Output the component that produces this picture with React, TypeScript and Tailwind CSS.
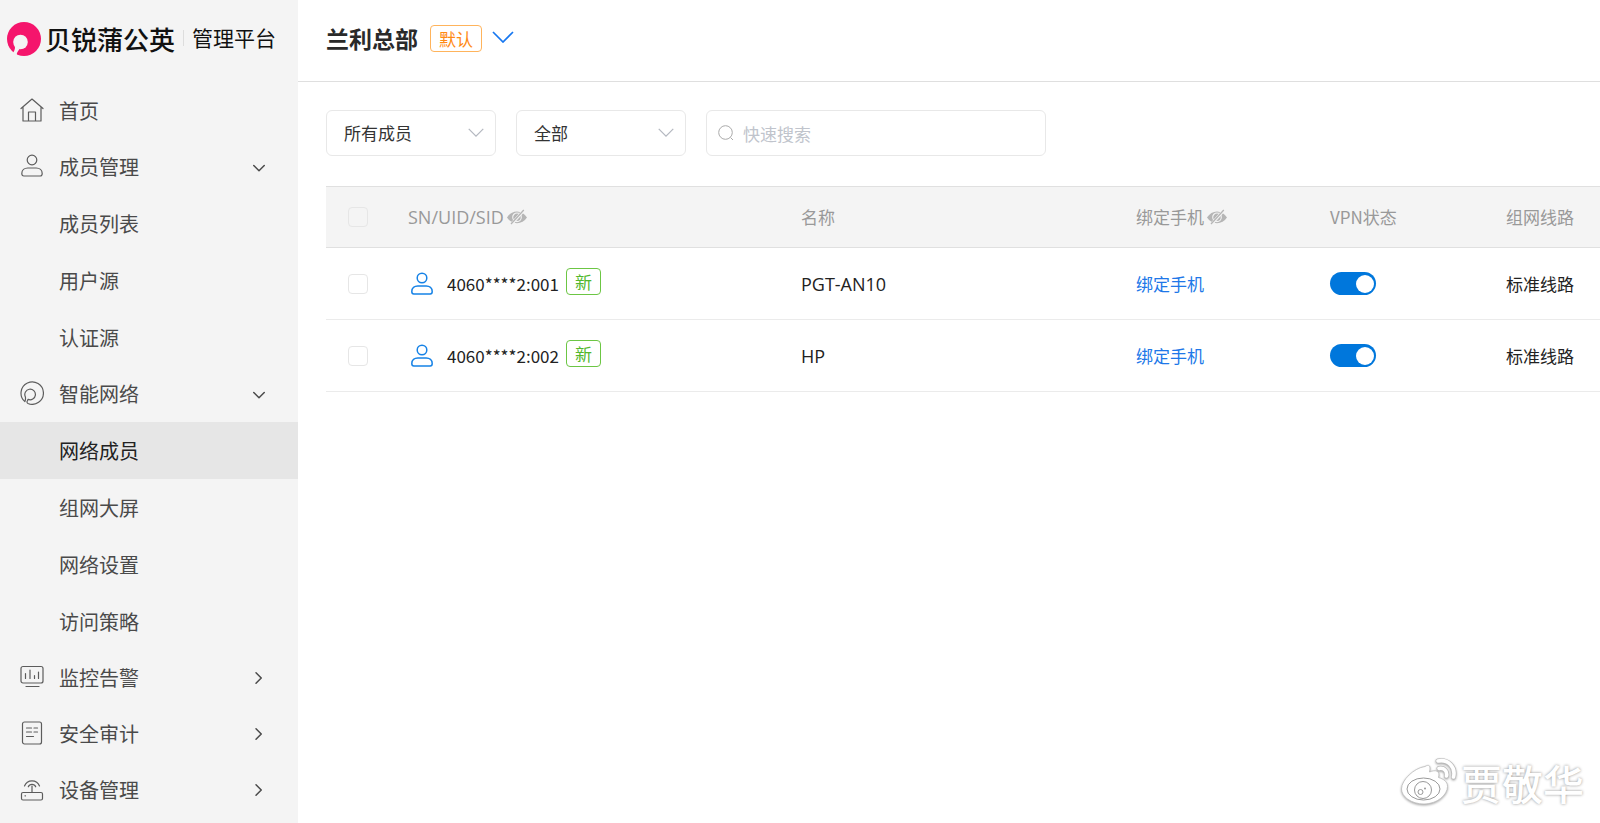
import { useState } from 'react';
import type { ReactNode } from 'react';

interface IconProps {
    className?: string;
}

interface MenuItem {
    label: string;
    icon: ReactNode;
    open?: boolean;
    children?: string[];
}

interface Member {
    sn: string;
    name: string;
    line: string;
}

function Svg({ className = 'mb-0.5 size-6 text-[#5c5c5c]', children }: IconProps & { children: ReactNode }) {
    return (
        <svg
            className={className}
            viewBox="0 0 24 24"
            fill="none"
            stroke="currentColor"
            strokeWidth="1.2"
            strokeLinecap="round"
            strokeLinejoin="round"
            aria-hidden="true"
        >
            {children}
        </svg>
    );
}

function HomeIcon() {
    return (
        <Svg>
            <path d="M1 10.5 12 1l11 9.500M3 9v14h18V9M8.500 23v-9h7v9" />
        </Svg>
    );
}

function UserIcon({ className }: IconProps) {
    return (
        <Svg className={className}>
            <circle cx="12" cy="6" r="4.800" />
            <path d="M1.800 19.500c0-3.500 2.700-5.500 6-5.500h8.400c3.300 0 6 2 6 5.500 0 1.700-.8 2.500-2 2.500H3.800c-1.200 0-2-.8-2-2.500Z" />
        </Svg>
    );
}

function NetworkIcon() {
    return (
        <Svg>
            <path d="M4.900 20.600a11.200 11.200 0 1 1 3.100 1.900c-1.200-.6-1.200-1.800-.6-2.800l.7-1.300a5.300 5.300 0 1 0-2.800-2.700c.5 1.300.4 2.300-.4 4.900Z" />
        </Svg>
    );
}

function MonitorIcon() {
    return (
        <Svg>
            <rect x="1" y="1.500" width="22" height="16.500" rx="2" />
            <path d="M5.500 8.500v5M10 5v8.500M14.500 10.500v3M18.500 7v6.500M6 21.500h13" />
        </Svg>
    );
}

function AuditIcon() {
    return (
        <Svg>
            <rect x="2.500" y="1" width="19" height="22" rx="2" />
            <path d="M6.500 7h5M14 7h3.500M6.500 11h5M14 11h3.500M6.500 15.500h7" />
        </Svg>
    );
}

function RouterIcon() {
    return (
        <Svg>
            <rect x="1.500" y="15.500" width="21" height="7.500" rx="1.500" />
            <path d="M12 9v6.500M5 18.800h.5M8.300 9.800a4 4 0 0 1 7.400 0M4.500 9a8 8 0 0 1 15 0" />
        </Svg>
    );
}

function Chevron({ open, className }: IconProps & { open?: boolean }) {
    return (
        <Svg className={className}>
            <path d={open ? 'M5 10l7 7 7-7' : 'M8 5l7 7-7 7'} strokeWidth="2" />
        </Svg>
    );
}

function WideChevron({ className }: IconProps) {
    return (
        <svg className={className} viewBox="0 0 22 12" fill="none" stroke="currentColor" aria-hidden="true">
            <path d="M1 1l10 10L21 1" strokeWidth="1.700" />
        </svg>
    );
}

function SearchIcon({ className }: IconProps) {
    return (
        <svg className={className} viewBox="0 0 16 16" fill="none" stroke="currentColor" aria-hidden="true">
            <circle cx="7.500" cy="7.500" r="6.800" />
            <path d="M12.500 12.500 15 15" />
        </svg>
    );
}

function EyeOffIcon() {
    return (
        <svg className="h-4 w-5 text-[#b5b5b5]" viewBox="0 0 20 16" aria-hidden="true">
            <path d="M0 8.500C2.500 4.500 6 2.500 10 2.500s7.500 2 10 6c-2.500 3.700-6 5.700-10 5.700S2.500 12.200 0 8.500Z" fill="currentColor" />
            <circle cx="10" cy="8.300" r="4.300" fill="none" stroke="#f4f4f4" strokeWidth="1.100" />
            <path d="M4.300 15.500 16.500 1.500" stroke="#f4f4f4" strokeWidth="3" />
            <path d="M4 15 16.800 1" stroke="currentColor" strokeWidth="1.300" />
        </svg>
    );
}

function Logo() {
    return (
        <svg className="size-[34px] shrink-0" viewBox="0 0 34 34" aria-hidden="true">
            <circle cx="17" cy="17" r="17" fill="#f5156c" />
            <circle cx="13.500" cy="20" r="7.300" fill="#f4f4f4" />
            <path d="M7.500 23.500c1 2 .5 4-1.500 7.500l4 3c-.8-2 0-3.500 2.500-7Z" fill="#f4f4f4" />
        </svg>
    );
}

function WeiboMark() {
    return (
        <svg className="h-12 w-14 drop-shadow-[0_1px_1px_rgba(0,0,0,0.35)]" viewBox="0 0 56 48" fill="none" aria-hidden="true">
            <path
                d="M24 8.500c4-2.500 6-1 4.500 5.500 6-2.500 11-1.500 9 5.500 5 1.500 9 4 9 9C46.500 37 36 46 23 46S.5 38.500.5 31C.5 22 13 10 24 8.500Z"
                fill="#fff"
                stroke="#bbb"
                strokeWidth=".8"
            />
            <ellipse cx="22.500" cy="31" rx="16.500" ry="11" stroke="#999" />
            <circle cx="22" cy="32" r="8.500" stroke="#999" />
            <circle cx="19.500" cy="34" r="2.500" stroke="#999" />
            <circle cx="24" cy="30.500" r="1" fill="#999" />
            <g strokeLinecap="round">
                <path d="M37 3c10-2 18 6 15.500 16M38 10.500c5-1 8.500 2.500 7.500 7.500" stroke="#bbb" strokeWidth="5" />
                <path d="M37 3c10-2 18 6 15.500 16M38 10.500c5-1 8.500 2.500 7.500 7.500" stroke="#fff" strokeWidth="3.600" />
            </g>
        </svg>
    );
}

const menu: MenuItem[] = [
    { label: '首页', icon: <HomeIcon /> },
    { label: '成员管理', icon: <UserIcon />, open: true, children: ['成员列表', '用户源', '认证源'] },
    { label: '智能网络', icon: <NetworkIcon />, open: true, children: ['网络成员', '组网大屏', '网络设置', '访问策略'] },
    { label: '监控告警', icon: <MonitorIcon />, children: [] },
    { label: '安全审计', icon: <AuditIcon />, children: [] },
    { label: '设备管理', icon: <RouterIcon />, children: [] },
];

const members: Member[] = [
    { sn: '4060****2:001', name: 'PGT-AN10', line: '标准线路' },
    { sn: '4060****2:002', name: 'HP', line: '标准线路' },
];

function Sidebar() {
    const active = '网络成员';

    return (
        <aside className="w-[298px] shrink-0 bg-[#f4f4f4] text-[20px] text-[#4a4a4a]">
            <div className="flex h-[83px] items-start pt-[22px] pl-[7px]">
                <Logo />
                <div className="flex h-8 items-center text-[#111]">
                    <span className="pl-1 text-[26px] font-medium">贝锐蒲公英</span>
                    <span className="mx-2 h-4 w-px bg-[#ddd]" />
                    <span className="text-[21px]">管理平台</span>
                </div>
            </div>
            <nav>
                {menu.map((item) => (
                    <div key={item.label}>
                        <a href="#" className="flex h-14 items-center pr-[30px] pl-5">
                            {item.icon}
                            <span className="ml-[15px] flex-1">{item.label}</span>
                            {item.children && <Chevron open={item.open} className="size-[18px]" />}
                        </a>
                        {item.children?.map((child) => (
                            <a
                                key={child}
                                href="#"
                                className={
                                    child === active
                                        ? 'flex h-[57px] items-center bg-[#e6e6e6] pl-[59px] text-[#222]'
                                        : 'flex h-[57px] items-center pl-[59px]'
                                }
                            >
                                {child}
                            </a>
                        ))}
                    </div>
                ))}
            </nav>
        </aside>
    );
}

function FilterSelect({ label, options }: { label: string; options: string[] }) {
    return (
        <div className="relative w-[170px]">
            <select
                aria-label={label}
                className="h-[46px] w-full appearance-none rounded-md border border-[#e8e8e8] bg-white pr-10 pl-[17px] text-[17px] text-[#333]"
            >
                {options.map((option) => (
                    <option key={option}>{option}</option>
                ))}
            </select>
            <WideChevron className="pointer-events-none absolute top-[18px] right-3 h-[9px] w-4 text-[#b4b8c0]" />
        </div>
    );
}

function Checkbox({ label }: { label: string }) {
    return (
        <input
            type="checkbox"
            aria-label={label}
            className="block size-5 appearance-none rounded-sm border border-[#e6e6e6] checked:bg-[#0077dc]"
        />
    );
}

function Toggle({ label }: { label: string }) {
    const [on, setOn] = useState(true);

    return (
        <button
            type="button"
            role="switch"
            aria-checked={on}
            aria-label={label}
            onClick={() => setOn(!on)}
            className={
                on
                    ? 'flex h-[23px] w-[46px] items-center justify-end rounded-full bg-[#0077dc] px-[2px]'
                    : 'flex h-[23px] w-[46px] items-center rounded-full bg-[#ccc] px-[2px]'
            }
        >
            <span className="size-[18px] rounded-full bg-white" />
        </button>
    );
}

function MemberTable() {
    return (
        <table className="mt-[30px] w-full table-fixed text-left text-[17px] text-[#222]">
            <thead>
                <tr className="h-[61px] border-y border-[#e0e0e0] bg-[#f4f4f4] text-[#999]">
                    <th className="w-[82px] pl-[22px]">
                        <Checkbox label="全选" />
                    </th>
                    <th className="w-[393px] font-normal">
                        <span className="flex items-center gap-[3px]">
                            <span className="font-['Open_Sans',sans-serif] text-lg">SN/UID/SID</span>
                            <EyeOffIcon />
                        </span>
                    </th>
                    <th className="font-normal">名称</th>
                    <th className="w-[194px] font-normal">
                        <span className="flex items-center gap-[3px]">
                            绑定手机
                            <EyeOffIcon />
                        </span>
                    </th>
                    <th className="w-[176px] font-normal">VPN状态</th>
                    <th className="w-[94px] font-normal">组网线路</th>
                </tr>
            </thead>
            <tbody>
                {members.map((member) => (
                    <tr key={member.sn} className="h-[72px] border-b border-[#ebebeb]">
                        <td className="pl-[22px]">
                            <Checkbox label={member.sn} />
                        </td>
                        <td>
                            <div className="flex items-center">
                                <UserIcon className="mx-[2px] size-6 stroke-[1.5] text-[#1682e6]" />
                                <span className="ml-[11px]">{member.sn}</span>
                                <span className="mb-1 ml-[7px] flex h-[27px] w-[35px] items-center justify-center rounded-sm border border-[#6cc644] text-[#52b82e]">
                                    新
                                </span>
                            </div>
                        </td>
                        <td className="font-['Open_Sans',sans-serif] text-lg">{member.name}</td>
                        <td>
                            <a href="#" className="text-[#2077e8]">
                                绑定手机
                            </a>
                        </td>
                        <td>
                            <Toggle label={`${member.sn} VPN`} />
                        </td>
                        <td>{member.line}</td>
                    </tr>
                ))}
            </tbody>
        </table>
    );
}

export default function App() {
    return (
        <div className="relative flex min-h-screen bg-white font-['Noto_Sans_CJK_SC',sans-serif]">
            <Sidebar />
            <main className="min-w-0 flex-1">
                <header className="flex h-[82px] items-center border-b border-[#dfdfdf] pb-1 pl-7">
                    <h1 className="text-[23px] font-bold text-[#2a2a2a]">兰利总部</h1>
                    <span className="ml-3 flex h-[27px] items-center rounded-sm border border-[#ffb45c] px-2 text-[17px] text-[#ff8a14]">
                        默认
                    </span>
                    <button type="button" aria-label="切换网络" className="mb-1 ml-[10px] text-[#1677f0]">
                        <WideChevron className="h-3 w-[22px]" />
                    </button>
                </header>
                <div className="pt-7 pl-7">
                    <div className="flex gap-5">
                        <FilterSelect label="成员" options={['所有成员']} />
                        <FilterSelect label="状态" options={['全部']} />
                        <div className="relative w-[340px]">
                            <SearchIcon className="absolute top-[15px] left-3 size-4 text-[#aaa]" />
                            <input
                                type="text"
                                aria-label="快速搜索"
                                placeholder="快速搜索"
                                className="h-[46px] w-full rounded-md border border-[#e8e8e8] pr-3 pl-9 text-[17px] placeholder:text-[#c0c4cc]"
                            />
                        </div>
                    </div>
                    <MemberTable />
                </div>
            </main>
            <div className="absolute right-4 bottom-4 flex items-center gap-1">
                <WeiboMark />
                <span className="text-[41px] leading-[50px] font-medium text-white [text-shadow:0_0_3px_rgba(0,0,0,0.45)]">
                    贾敬华
                </span>
            </div>
        </div>
    );
}
